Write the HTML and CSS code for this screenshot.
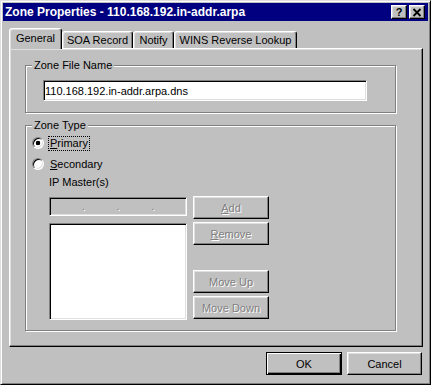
FILE: index.html
```
<!DOCTYPE html>
<html lang="en">
<head>
    <meta charset="UTF-8">
    <title>Zone Properties</title>
    <link rel="stylesheet" href="styles.css">
</head>
<body>
    <div class="window">
        <div class="titlebar">
            <span class="title">Zone Properties - 110.168.192.in-addr.arpa</span>
            <div class="caption-buttons">
                <span class="cap-btn">?</span>
                <span class="cap-btn">
                    <svg width="10" height="9" viewBox="0 0 10 9">
                        <path d="M1.5 1 L8.5 8 M8.5 1 L1.5 8" stroke="#000" stroke-width="1.8" fill="none"/>
                    </svg>
                </span>
            </div>
        </div>

        <div class="tabs">
            <div class="tab active tab-general">General</div>
            <div class="tab tab-soa">SOA Record</div>
            <div class="tab tab-notify">Notify</div>
            <div class="tab tab-wins">WINS Reverse Lookup</div>
        </div>

        <div class="panel">
            <fieldset class="group group-file">
                <legend>Zone File Name</legend>
                <input class="textbox" type="text" value="110.168.192.in-addr.arpa.dns" readonly>
            </fieldset>

            <fieldset class="group group-type">
                <legend>Zone Type</legend>
                <div class="radio-row">
                    <span class="radio checked"></span>
                    <span class="radio-label focus"><u>P</u>rimary</span>
                </div>
                <div class="radio-row second">
                    <span class="radio"></span>
                    <span class="radio-label"><u>S</u>econdary</span>
                </div>
                <div class="ip-caption">IP Master(s)</div>
                <div class="ip-area">
                    <div class="ip-lists">
                        <div class="ip-field">
                            <span>.</span><span>.</span><span>.</span>
                        </div>
                        <div class="ip-list"></div>
                    </div>
                    <div class="btn-col">
                        <button class="btn" disabled><u>A</u>dd</button>
                        <button class="btn" disabled><u>R</u>emove</button>
                        <button class="btn move-up" disabled>Move Up</button>
                        <button class="btn" disabled>Move Down</button>
                    </div>
                </div>
            </fieldset>
        </div>

        <div class="footer">
            <button class="btn btn-ok">OK</button>
            <button class="btn btn-cancel">Cancel</button>
        </div>
    </div>
</body>
</html>
```

FILE: styles.css
```
body {
    margin: 0;
    font: 11px "Liberation Sans", Arial, sans-serif;
    color: #000;
    background: #c0c0c0;
}
.window {
    width: 431px;
    height: 385px;
    box-sizing: border-box;
    padding: 2px;
    background: #c0c0c0;
    border: 1px solid;
    border-color: #dfdfdf #000 #000 #dfdfdf;
    box-shadow: inset 1px 1px #fff, inset -1px -1px #808080;
}

/* title bar */
.titlebar {
    height: 18px;
    display: flex;
    align-items: center;
    justify-content: space-between;
    padding: 0 3px 0 2px;
    background: #000080;
    color: #fff;
}
.title {
    font-weight: bold;
    font-size: 12px;
}
.caption-buttons {
    display: flex;
    gap: 2px;
}
.cap-btn {
    width: 16px;
    height: 14px;
    box-sizing: border-box;
    display: flex;
    align-items: center;
    justify-content: center;
    background: #c0c0c0;
    color: #000;
    font-weight: bold;
    font-size: 11px;
    line-height: 12px;
    border: 1px solid;
    border-color: #fff #000 #000 #fff;
    box-shadow: inset -1px -1px #808080, inset 1px 1px #dfdfdf;
}

/* tabs */
.tabs {
    display: flex;
    align-items: flex-end;
    height: 27px;
    margin-left: 6px;
}
.tab {
    box-sizing: border-box;
    height: 17px;
    padding-top: 2px;
    line-height: 13px;
    text-align: center;
    background: #c0c0c0;
    border: 1px solid;
    border-bottom: 0;
    border-color: #fff #000 transparent #fff;
    border-radius: 3px 3px 0 0;
    box-shadow: inset -1px 0 #808080, inset 1px 1px #dfdfdf;
}
.tab.active {
    height: 21px;
    padding-top: 3px;
    margin-bottom: -1px;
    position: relative;
    z-index: 1;
}
.tab-general { width: 53px; }
.tab-soa { width: 71px; }
.tab-notify { width: 41px; }
.tab-wins { width: 123px; }

.panel {
    box-sizing: border-box;
    width: 414px;
    height: 299px;
    margin-left: 6px;
    padding: 10px 0 0 15px;
    border: 1px solid;
    border-color: #fff #000 #000 #fff;
    box-shadow: inset -1px -1px #808080, inset 1px 1px #dfdfdf;
}

/* group boxes */
.group {
    width: 371px;
    min-width: 0;
    box-sizing: border-box;
    margin: 0;
    padding: 8px 6px 11px;
    border: 1px solid #808080;
    box-shadow: inset 1px 1px #fff, 1px 1px #fff;
}
.group legend {
    padding: 0 2px;
    line-height: 13px;
    background: #c0c0c0;
}
.group-type {
    margin-top: 6px;
    padding: 3px 6px 10px;
}

.textbox {
    display: block;
    width: 324px;
    height: 21px;
    box-sizing: border-box;
    margin: 0 0 0 11px;
    padding: 0 1px;
    font: inherit;
    color: #000;
    background: #fff;
    outline: none;
    border: 1px solid;
    border-color: #808080 #fff #fff #808080;
    box-shadow: inset 1px 1px #000, inset -1px -1px #dfdfdf;
}

/* radios */
.radio-row {
    display: flex;
    align-items: center;
    height: 16px;
}
.radio-row.second {
    margin-top: 5px;
}
.radio {
    width: 12px;
    height: 12px;
    box-sizing: border-box;
    border-radius: 50%;
    background: #fff;
    border: 1px solid;
    border-color: #808080 #fff #fff #808080;
    box-shadow: inset 1px 1px #000, inset -1px -1px #dfdfdf;
}
.radio.checked {
    background: radial-gradient(circle, #000 0 2px, #fff 2.6px);
}
.radio-label {
    margin-left: 4px;
    padding: 0 1px;
    line-height: 13px;
    border: 1px dotted transparent;
}
.radio-label.focus {
    border-color: #000;
}

.ip-caption {
    margin: 4px 0 7px 17px;
    line-height: 13px;
}
.ip-area {
    display: flex;
    gap: 6px;
    margin-left: 17px;
}
.ip-lists {
    width: 138px;
    padding-top: 1px;
}
.ip-field,
.ip-list {
    box-sizing: border-box;
    border: 1px solid;
    border-color: #808080 #fff #fff #808080;
    box-shadow: inset 1px 1px #000, inset -1px -1px #dfdfdf;
}
.ip-field {
    height: 19px;
    display: flex;
    align-items: center;
    justify-content: space-evenly;
    line-height: 13px;
    color: #808080;
    text-shadow: 1px 1px #fff;
    background: #c0c0c0;
}
.ip-list {
    height: 97px;
    margin-top: 7px;
    background: #fff;
}

/* buttons */
.btn-col {
    display: flex;
    flex-direction: column;
    gap: 3px;
    width: 76px;
}
.btn-col .move-up {
    margin-top: 22px;
}
.btn {
    height: 23px;
    box-sizing: border-box;
    padding: 0;
    font: inherit;
    color: #000;
    background: #c0c0c0;
    border: 1px solid;
    border-color: #fff #000 #000 #fff;
    box-shadow: inset -1px -1px #808080, inset 1px 1px #dfdfdf;
}
.btn:disabled {
    color: #808080;
    text-shadow: 1px 1px #fff;
}

.footer {
    display: flex;
    justify-content: flex-end;
    gap: 5px;
    margin-top: 5px;
    padding-right: 6px;
}
.btn-ok {
    width: 76px;
    border-color: #000;
    box-shadow: inset 1px 1px #fff, inset -1px -1px #000, inset -2px -2px #808080;
}
.btn-cancel {
    width: 75px;
}
```
